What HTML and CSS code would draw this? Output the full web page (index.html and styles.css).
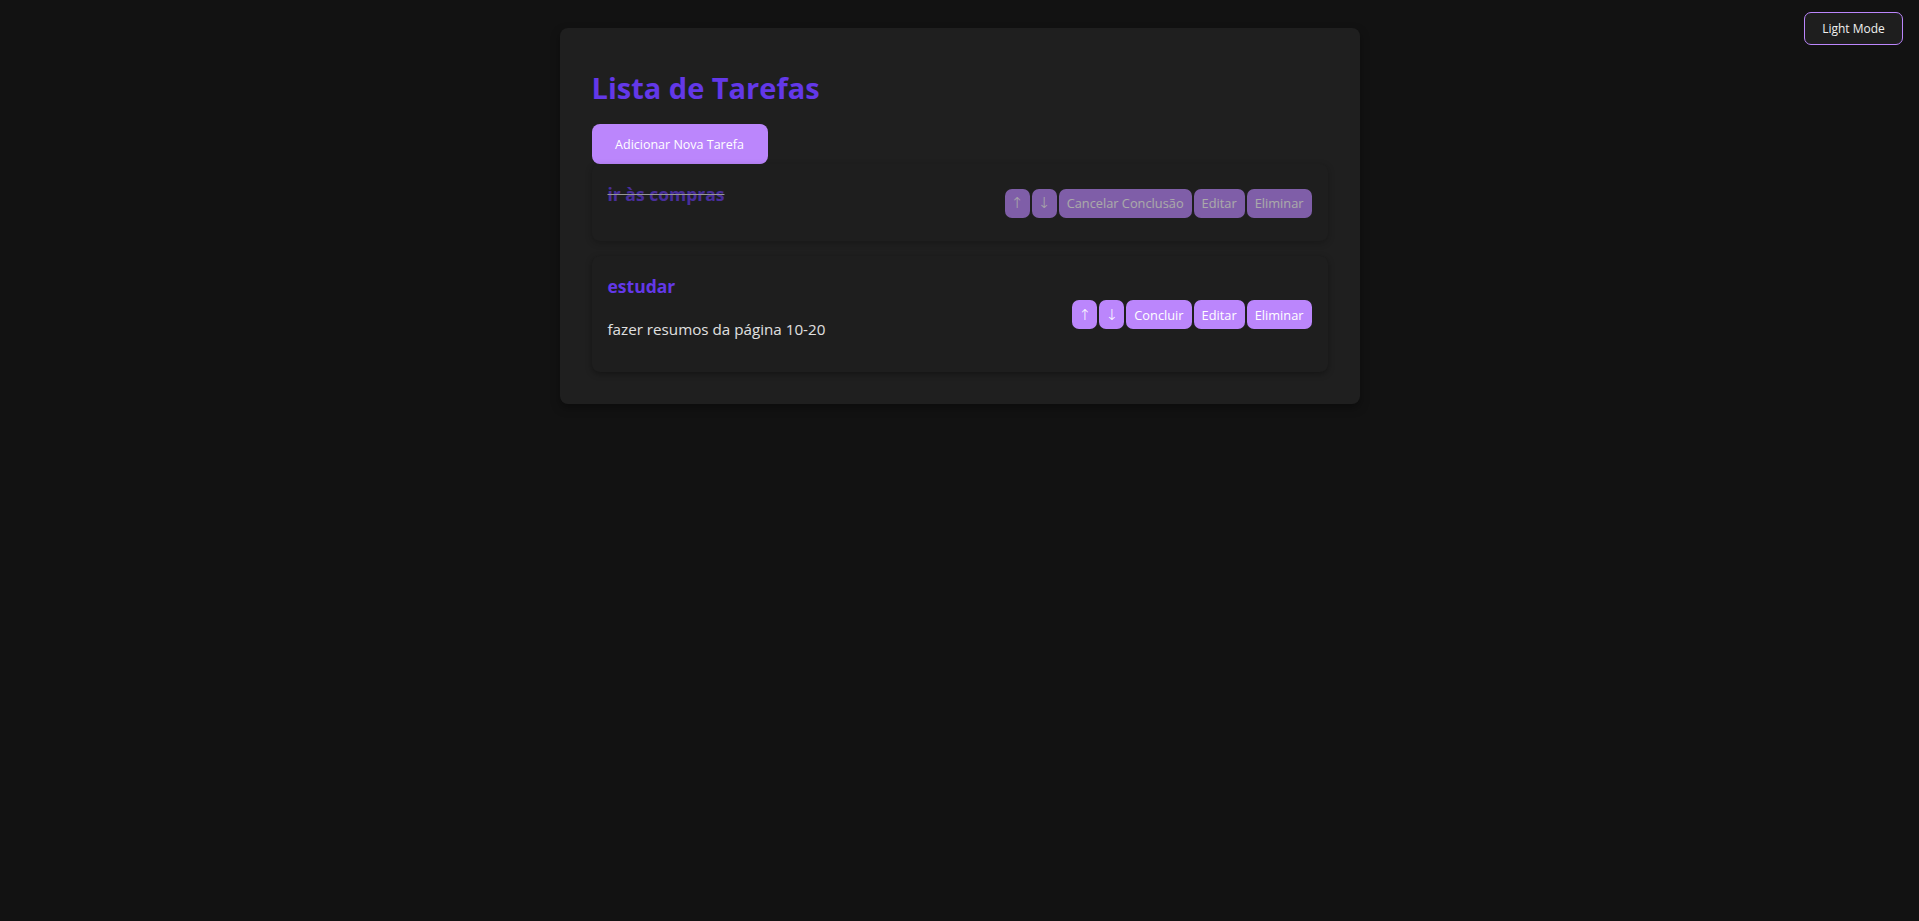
FILE: index.html
```html
<!DOCTYPE html>
<html lang="pt">
<head>
<meta charset="utf-8">
<title>Lista de Tarefas</title>
<link rel="stylesheet" href="styles.css">
</head>
<body>
<button class="theme-toggle">Light Mode</button>
<div class="container">
  <h1 class="title">Lista de Tarefas</h1>
  <button class="add-btn">Adicionar Nova Tarefa</button>
  <div class="task-list">
    <div class="task completed">
      <div class="task-info">
        <h3 class="task-title">ir às compras</h3>
      </div>
      <div class="task-actions">
        <button class="act arrow">↑</button>
        <button class="act arrow">↓</button>
        <button class="act">Cancelar Conclusão</button>
        <button class="act">Editar</button>
        <button class="act">Eliminar</button>
      </div>
    </div>
    <div class="task">
      <div class="task-info">
        <h3 class="task-title">estudar</h3>
        <p class="task-desc">fazer resumos da página 10-20</p>
      </div>
      <div class="task-actions">
        <button class="act arrow">↑</button>
        <button class="act arrow">↓</button>
        <button class="act">Concluir</button>
        <button class="act">Editar</button>
        <button class="act">Eliminar</button>
      </div>
    </div>
  </div>
</div>
</body>
</html>
```

FILE: styles.css
```css
html, body {
  margin: 0;
  padding: 0;
}
body {
  background: #121212;
  color: #e0e0e0;
  font-family: "Open Sans", "Noto Sans", sans-serif;
  min-height: 100vh;
  padding-top: 28px;
  box-sizing: border-box;
}
.theme-toggle {
  position: fixed;
  top: 12px;
  right: 16px;
  width: 99px;
  height: 33px;
  background: #1e1e1e;
  color: #f0f0f0;
  border: 1px solid #bb86fc;
  border-radius: 7px;
  font-family: inherit;
  font-size: 12px;
  padding: 0;
  cursor: pointer;
}
.container {
  width: 800px;
  margin: 0 auto;
  box-sizing: border-box;
  padding: 32px;
  background: #1f1f1f;
  border-radius: 8px;
  box-shadow: 0 4px 10px rgba(0,0,0,0.35);
}
.title {
  margin: 0 0 15px 0;
  padding-top: 6px;
  font-size: 29px;
  line-height: 43px;
  color: #6338e8;
  font-weight: 700;
}
.add-btn {
  display: block;
  height: 40px;
  width: 176px;
  padding: 0;
  background: #bb86fc;
  color: #ffffff;
  border: none;
  border-radius: 8px;
  font-family: inherit;
  font-size: 12.5px;
  cursor: pointer;
}
.task-list {
  display: flex;
  flex-direction: column;
  gap: 15px;
}
.task {
  display: flex;
  justify-content: space-between;
  align-items: center;
  padding: 18px 16px 17px;
  background: #1e1e1e;
  border-radius: 8px;
  box-shadow: 0 2px 6px rgba(0,0,0,0.35);
}
.task.completed {
  opacity: 0.62;
}
.task-title {
  margin: 0 0 17px 0;
  font-size: 17.5px;
  line-height: 25px;
  color: #6338e8;
  font-weight: 700;
}
.task.completed .task-title {
  text-decoration: line-through;
  text-decoration-color: #e0e0e0;
}
.task-desc {
  margin: 19px 0 15px;
  font-size: 15.2px;
  line-height: 22px;
  color: #e0e0e0;
}
.task-actions {
  display: flex;
  gap: 2px;
}
.act {
  height: 29px;
  padding: 0 8px;
  background: #bb86fc;
  color: #ffffff;
  border: none;
  border-radius: 7px;
  font-family: inherit;
  font-size: 12.8px;
  cursor: pointer;
}
.act.arrow {
  width: 25px;
  padding: 0;
  font-family: "DejaVu Sans", sans-serif;
  font-size: 15px;
  font-weight: 300;
}
```
